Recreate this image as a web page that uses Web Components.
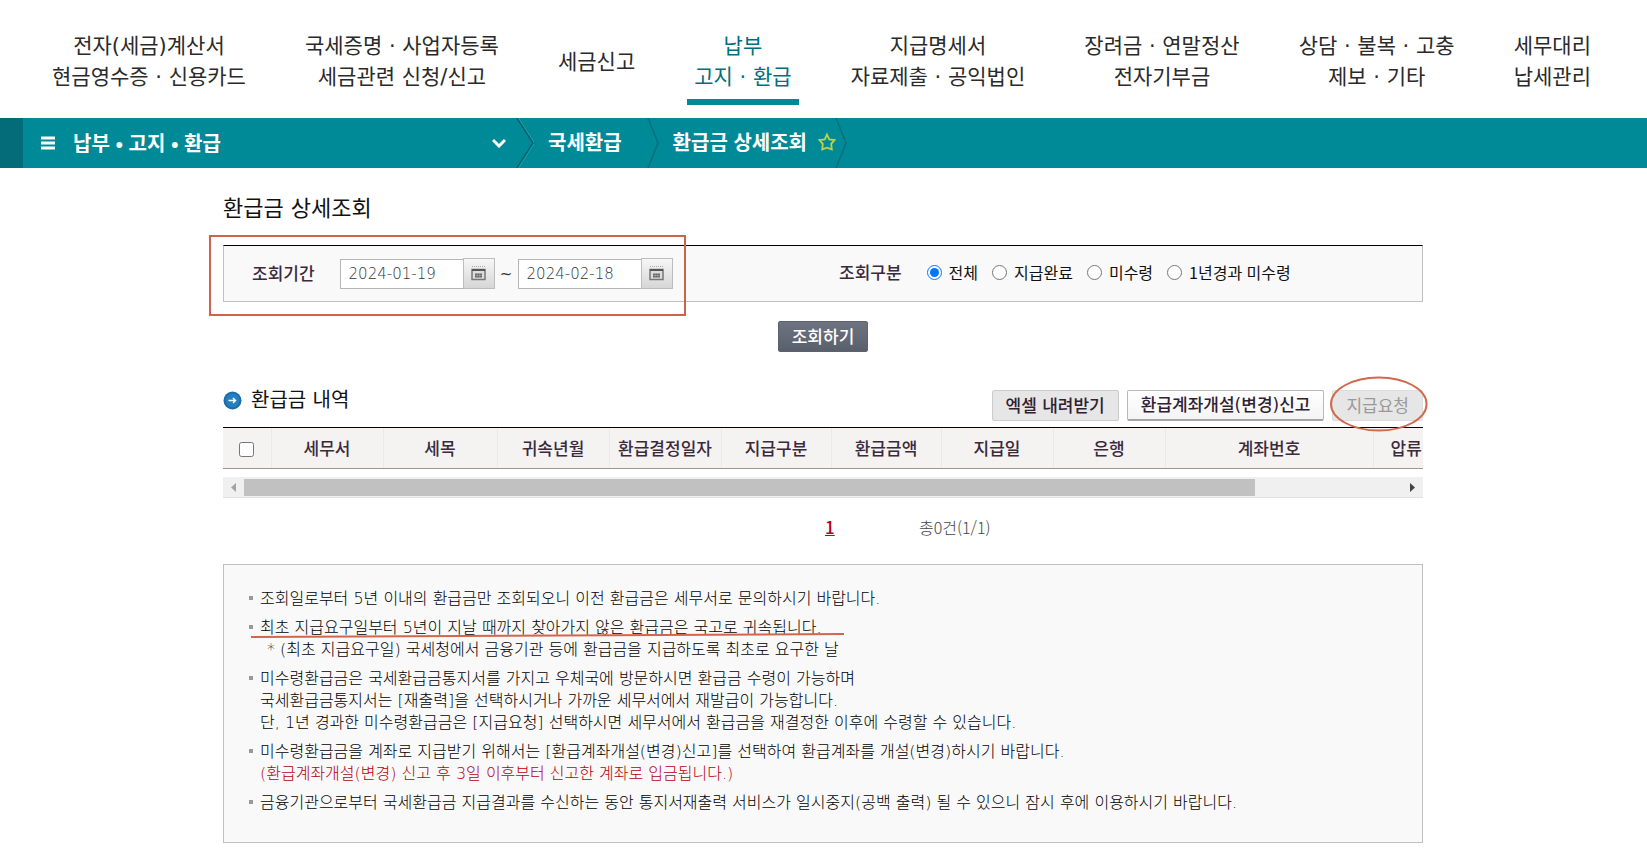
<!DOCTYPE html>
<html lang="ko">
<head>
<meta charset="utf-8">
<title>환급금 상세조회</title>
<style>
  body { margin: 0; background: #fff; color: #222; font-family: "DejaVu Sans", "Noto Sans CJK KR", sans-serif; font-size: 16px; line-height: 22px; }
</style>
</head>
<body>
<refund-page></refund-page>

<script>
const define = (name, html, setup) => {
  const template = document.createElement('template');
  template.innerHTML = html;
  customElements.define(name, class extends HTMLElement {
    constructor() {
      super();
      this.attachShadow({ mode: 'open' }).append(template.content.cloneNode(true));
    }
    connectedCallback() { if (setup) setup(this, this.shadowRoot); }
  });
};

/* Top menu entry: one or two centred lines */
define('menu-item', `
<style>
  :host { display: flex; }
  a { display: flex; flex-direction: column; justify-content: center; text-align: center; padding-bottom: 6px; border-bottom: 6px solid transparent; color: #2a2a2a; text-decoration: none; font-size: 21px; line-height: 31px; white-space: nowrap; }
  :host([active]) a { color: #00707e; border-color: #048994; padding-left: 7px; padding-right: 7px; margin: 0 -7px; }
</style>
<a href="#"><slot></slot></a>`);

define('main-menu', `
<style>
  :host { display: block; }
  nav { display: flex; justify-content: space-between; align-items: stretch; padding: 31px 56px 13px 52px; }
</style>
<nav aria-label="주메뉴">
  <menu-item>전자(세금)계산서<br>현금영수증 · 신용카드</menu-item>
  <menu-item>국세증명 · 사업자등록<br>세금관련 신청/신고</menu-item>
  <menu-item>세금신고</menu-item>
  <menu-item active>납부<br>고지 · 환급</menu-item>
  <menu-item>지급명세서<br>자료제출 · 공익법인</menu-item>
  <menu-item>장려금 · 연말정산<br>전자기부금</menu-item>
  <menu-item>상담 · 불복 · 고충<br>제보 · 기타</menu-item>
  <menu-item>세무대리<br>납세관리</menu-item>
</nav>`);

define('crumb-bar', `
<style>
  :host { display: block; }
  nav { display: flex; align-items: center; height: 50px; background: #008996; border-left: 23px solid #046b79; color: #fff; font-family: "Noto Sans CJK KR", sans-serif; font-size: 20px; font-weight: 700; line-height: 30px; white-space: nowrap; }
  svg { display: block; flex: none; }
  button { display: flex; align-items: center; width: 493px; height: 50px; padding: 0 10px 0 18px; border: 0; background: none; color: inherit; font: inherit; text-align: left; }
  button span { flex: 1; padding-left: 18px; }
  a { color: inherit; text-decoration: none; }
  .group { padding: 0 25px 2px 14px; }
  .page { padding: 0 11px 2px 14px; }
  .star { padding: 0; border: 0; width: 18px; height: 18px; margin-top: -3px; }
  .last { margin-left: -2px; }
</style>
<nav aria-label="현재 위치">
  <button type="button">
    <svg width="14" height="14" viewBox="0 0 14 14"><path d="M0 2h14M0 7h14M0 12h14" stroke="#fff" stroke-width="3"/></svg>
    <span>납부 • 고지 • 환급</span>
    <svg width="14" height="10" viewBox="0 0 14 10"><path d="M1 2l6 6 6-6" fill="none" stroke="#fff" stroke-width="3"/></svg>
  </button>
  <svg width="18" height="50" viewBox="0 0 18 50"><path d="M1 0l16 25L1 50" fill="none" stroke="#03626e" stroke-width="1.5"/><path d="M2.500 0l16 25-16 25" fill="none" stroke="#2a9ca7"/></svg>
  <a class="group" href="#">국세환급</a>
  <svg width="12" height="50" viewBox="0 0 12 50"><path d="M1 0l10 25L1 50" fill="none" stroke="#03717d" stroke-width="1.5"/></svg>
  <a class="page" href="#">환급금 상세조회</a>
  <button class="star" type="button" aria-label="즐겨찾기">
    <svg width="18" height="18" viewBox="0 0 18 18"><path d="M9 1.500l2.200 4.900 5.300.6-3.300 3.800.6 5.600-4.800-1.800-4.800 1.800.6-5.600L1.500 7l5.300-.6z" fill="none" stroke="#c2d048" stroke-width="1.800"/></svg>
  </button>
  <svg class="last" width="14" height="50" viewBox="0 0 14 50"><path d="M2 0l10 25L2 50" fill="none" stroke="#03717d" stroke-width="1.500"/></svg>
</nav>`);

define('date-range', `
<style>
  :host { display: flex; align-items: center; }
  label { font-size: 17px; font-weight: 500; color: #3a2a3c; padding: 0 25px 0 28px; }
  input { box-sizing: border-box; width: 124px; height: 30px; padding: 0 8px; border: 1px solid #b5b5b5; background: #fff; color: #333; font: inherit; font-size: 15px; font-weight: 200; }
  button { display: grid; place-items: center; width: 32px; height: 31px; padding: 0; margin-left: -1px; border: 1px solid #bdbdbd; background: linear-gradient(#f7f7f7, #d6d6d6); }
  .to { width: 23px; text-align: center; color: #333; font-size: 15px; }
</style>
<label for="from">조회기간</label>
<input id="from" type="text" value="2024-01-19">
<button type="button" aria-label="시작일 달력"></button>
<span class="to">~</span>
<input id="until" type="text" value="2024-02-18" aria-label="종료일">
<button type="button" aria-label="종료일 달력"></button>`, (el, root) => {
  root.querySelectorAll('button').forEach(b => b.innerHTML =
    '<svg width="15" height="15" viewBox="0 0 15 15"><path d="M1 .5h13" stroke="#aaa" stroke-dasharray="1 1"/><path d="M1 3.500h13v10H1z" fill="#ddd" stroke="#777" stroke-width="1.500"/><path d="M1 4h13" stroke="#555" stroke-width="2"/><path d="M4 7.500h7v4H4z" fill="#666"/><path d="M4 9.500h7M6.300 7v5M8.700 7v5" stroke="#aaa" stroke-width=".6"/></svg>');
});

define('kind-choice', `
<style>
  :host { display: block; }
  div { display: flex; align-items: center; padding-bottom: 3px; color: #111; white-space: nowrap; font-family: "Noto Sans CJK KR", sans-serif; }
  strong { font-size: 17px; font-weight: 500; color: #3a2a3c; margin-right: 25px; }
  label { display: flex; align-items: center; margin-right: 14px; }
  input { width: 15px; height: 15px; margin: 0 7px 0 0; }
</style>
<div role="radiogroup" aria-labelledby="t">
  <strong id="t">조회구분</strong>
  <label><input type="radio" name="kind" checked>전체</label>
  <label><input type="radio" name="kind">지급완료</label>
  <label><input type="radio" name="kind">미수령</label>
  <label><input type="radio" name="kind">1년경과 미수령</label>
</div>`);

define('search-panel', `
<style>
  :host { display: block; }
  .panel { position: relative; display: grid; grid-template-columns: 615px 1fr; align-items: center; box-sizing: border-box; height: 57px; border: 1px solid #c0c0c0; border-top-color: #000; background: #f9f9f9; }
  .mark { position: absolute; left: -15px; top: -11px; width: 473px; height: 77px; border: 2px solid #cb644b; pointer-events: none; }
</style>
<div class="panel">
  <date-range></date-range>
  <kind-choice></kind-choice>
  <div class="mark"></div>
</div>`);

define('action-button', `
<style>
  :host { display: block; position: relative; }
  button { display: block; box-sizing: border-box; height: 31px; padding: 0 13px; border: 1px solid #ccc; border-radius: 2px; background: #e6e6e6; color: #2f2032; font: inherit; font-size: 17px; font-weight: 500; line-height: 26px; white-space: nowrap; }
  :host([kind=primary]) button { border-color: #5d636e; background: linear-gradient(#6d7380, #5a606b); color: #fff; }
  :host([kind=raised]) button { border-color: #b9b9b9; border-bottom: 2px solid #a5a5a5; background: linear-gradient(#fff, #f4f4f4); }
  button:disabled { border-color: #ddd; color: #999; font-weight: 400; }
  svg { display: none; position: absolute; left: -2px; top: -14px; width: calc(100% + 7px); height: 56px; overflow: visible; pointer-events: none; }
  :host([circled]) svg { display: block; }
</style>
<button type="button"><slot></slot></button>
<svg viewBox="0 0 98 57" preserveAspectRatio="none"><ellipse cx="49" cy="28.500" rx="48" ry="27" fill="none" stroke="#d2694c" stroke-width="2"/></svg>`, (el, root) => {
  root.querySelector('button').disabled = el.hasAttribute('disabled');
});

define('refund-table', `
<style>
  :host { display: block; }
  .clip { overflow: hidden; border-top: 1px solid #000; border-bottom: 1px solid #999; }
  table { width: 100%; table-layout: fixed; border-collapse: collapse; background: #f5f3f2; }
  th { height: 38px; padding: 2px 0 0; border-left: 1px solid #ebe8e8; font-size: 17px; font-weight: 500; color: #3a2a3c; line-height: 22px; white-space: nowrap; text-align: center; }
  th:first-child { border-left: 0; }
  th:last-child { text-align: left; padding-left: 17px; }
  input { display: block; width: 15px; height: 15px; margin: 0 auto; }
  .scroll { display: flex; align-items: center; justify-content: space-between; height: 21px; margin-top: 8px; background: #f0f0f0; border-bottom: 1px solid #e2e2e2; box-sizing: border-box; }
  .track { flex: 1; }
  .thumb { width: calc(100% - 147px); height: 17px; background: #c1c1c1; }
  svg { display: block; width: 21px; height: 9px; }
</style>
<div class="clip"><table>
  <colgroup><col style="width:48px"><col style="width:112px"><col style="width:114px"><col style="width:112px"><col style="width:112px"><col style="width:110px"><col style="width:110px"><col style="width:112px"><col style="width:112px"><col style="width:208px"><col></colgroup>
  <thead><tr>
    <th scope="col"><input type="checkbox" aria-label="전체 선택"></th>
    <th scope="col">세무서</th><th scope="col">세목</th><th scope="col">귀속년월</th><th scope="col">환급결정일자</th><th scope="col">지급구분</th><th scope="col">환급금액</th><th scope="col">지급일</th><th scope="col">은행</th><th scope="col">계좌번호</th><th scope="col">압류</th>
  </tr></thead>
</table></div>
<div class="scroll">
  <svg viewBox="0 0 21 9"><path d="M13 0v9L8 4.500z" fill="#a3a3a3"/></svg>
  <div class="track"><div class="thumb"></div></div>
  <svg viewBox="0 0 21 9"><path d="M8 0v9l5-4.500z" fill="#444"/></svg>
</div>`);

define('page-links', `
<style>
  :host { display: grid; grid-template-columns: 1fr 10px 1fr; align-items: center; padding-left: 14px; font-family: "Noto Sans CJK KR", sans-serif; }
  a { grid-column: 2; color: #b5001f; font-size: 17px; font-weight: 500; }
  span { padding-left: 84px; color: #444; font-weight: 300; }
</style>
<a href="#" aria-current="page">1</a><span>총0건(1/1)</span>`);

define('notice-list', `
<style>
  :host { display: block; }
  ul { margin: 0; padding: 23px 36px 28px; border: 1px solid #c0c0c0; background: #f9f9f9; list-style: none; color: #000; font-weight: 300; }
  li { position: relative; }
  li + li { margin-top: 7px; }
  li::before { content: ""; position: absolute; left: -11px; top: 8px; width: 4px; height: 4px; background: #999; }
  .sub { padding-left: 7px; }
  em { font-style: normal; color: #b5000b; }
  svg { position: absolute; left: -9px; top: 15px; width: 593px; height: 6px; pointer-events: none; }
</style>
<ul>
  <li>조회일로부터 5년 이내의 환급금만 조회되오니 이전 환급금은 세무서로 문의하시기 바랍니다.</li>
  <li>최초 지급요구일부터 5년이 지날 때까지 찾아가지 않은 환급금은 국고로 귀속됩니다.
    <div class="sub">* (최초 지급요구일) 국세청에서 금융기관 등에 환급금을 지급하도록 최초로 요구한 날</div>
    <svg viewBox="0 0 593 6"><path d="M0 5Q300 3 593 2" fill="none" stroke="#d2664c" stroke-width="2"/></svg></li>
  <li>미수령환급금은 국세환급금통지서를 가지고 우체국에 방문하시면 환급금 수령이 가능하며<br>국세환급금통지서는 [재출력]을 선택하시거나 가까운 세무서에서 재발급이 가능합니다.<br>단, 1년 경과한 미수령환급금은 [지급요청] 선택하시면 세무서에서 환급금을 재결정한 이후에 수령할 수 있습니다.</li>
  <li>미수령환급금을 계좌로 지급받기 위해서는 [환급계좌개설(변경)신고]를 선택하여 환급계좌를 개설(변경)하시기 바랍니다.<br><em>(환급계좌개설(변경) 신고 후 3일 이후부터 신고한 계좌로 입금됩니다.)</em></li>
  <li>금융기관으로부터 국세환급금 지급결과를 수신하는 동안 통지서재출력 서비스가 일시중지(공백 출력) 될 수 있으니 잠시 후에 이용하시기 바랍니다.</li>
</ul>`);

define('refund-page', `
<style>
  :host { display: block; }
  main { max-width: 1200px; margin: 0 auto; padding: 25px 1px 20px 0; }
  h1, h2 { margin: 0; font-weight: 400; color: #111; }
  h1 { font-size: 22px; line-height: 32px; margin-bottom: 20px; }
  .submit { display: flex; justify-content: center; margin: 19px 0 38px; }
  .head { display: flex; align-items: center; margin-bottom: 6px; }
  h2 { display: flex; align-items: center; gap: 9px; flex: 1; font-size: 20px; line-height: 30px; margin-top: -11px; }
  .actions { display: flex; gap: 8px; }
  page-links { margin: 18px 0 26px; }
</style>
<main-menu></main-menu>
<crumb-bar></crumb-bar>
<main>
  <h1>환급금 상세조회</h1>
  <search-panel></search-panel>
  <div class="submit"><action-button kind="primary">조회하기</action-button></div>
  <div class="head">
    <h2><svg width="19" height="19" viewBox="0 0 19 19"><circle cx="9.500" cy="9.500" r="9" fill="#1b6ca8"/><circle cx="9.500" cy="9.500" r="7" fill="#237fc0"/><path d="M5.500 9.500h7M10 7l2.500 2.500L10 12" fill="none" stroke="#fff" stroke-width="1.500"/></svg>환급금 내역</h2>
    <div class="actions">
      <action-button>엑셀 내려받기</action-button>
      <action-button kind="raised">환급계좌개설(변경)신고</action-button>
      <action-button disabled circled>지급요청</action-button>
    </div>
  </div>
  <refund-table></refund-table>
  <page-links></page-links>
  <notice-list></notice-list>
</main>`);
</script>
</body>
</html>
